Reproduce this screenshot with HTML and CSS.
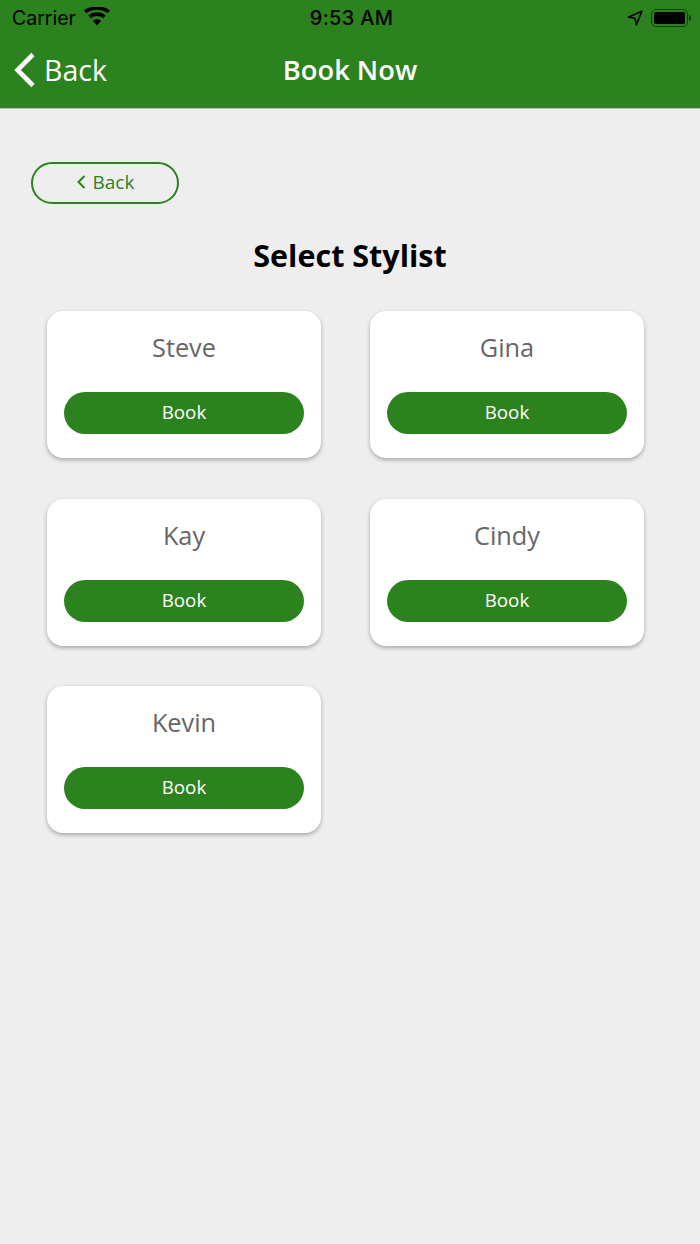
FILE: index.html
```html
<!DOCTYPE html>
<html lang="en">
<head>
    <meta charset="UTF-8">
    <meta name="viewport" content="width=device-width, initial-scale=1.0">
    <title>Book Now</title>
    <link rel="stylesheet" href="styles.css">
</head>
<body>
    <header class="header">
        <div class="status-bar">
            <div class="status-left">
                <span class="carrier">Carrier</span>
                <svg class="wifi" width="26" height="19" viewBox="0 0 26 19">
                    <path d="M13 18.5 L8.9 13.7 C11.2 11.7 14.8 11.7 17.1 13.7 Z" fill="#000"/>
                    <path d="M6.8 11.3 L4.3 8.4 C9.3 4.2 16.7 4.2 21.7 8.4 L19.2 11.3 C15.6 8.2 10.4 8.2 6.8 11.3 Z" fill="#000"/>
                    <path d="M2.3 6.1 L0 3.4 C7.5 -1.9 18.5 -1.9 26 3.4 L23.7 6.1 C17.4 1.6 8.6 1.6 2.3 6.1 Z" fill="#000"/>
                </svg>
            </div>
            <span class="time">9:53 AM</span>
            <div class="status-right">
                <svg class="arrow" width="16" height="16" viewBox="0 0 16 16">
                    <path d="M14.8 1.2 L1.4 7.2 L7.9 8.3 L9.4 14.8 Z" fill="none" stroke="#000" stroke-width="1.6" stroke-linejoin="round"/>
                </svg>
                <div class="battery"><div class="battery-fill"></div></div>
                <div class="battery-cap"></div>
            </div>
        </div>
        <nav class="nav">
            <a class="nav-back">
                <svg width="22" height="36" viewBox="0 0 22 36">
                    <path d="M20 2.5 L4.5 18 L20 33.5" fill="none" stroke="#fff" stroke-width="4.6"/>
                </svg>
                <span>Back</span>
            </a>
            <h2 class="nav-title">Book Now</h2>
        </nav>
    </header>

    <main class="content">
        <button class="back-btn">
            <svg width="10" height="14" viewBox="0 0 10 14">
                <path d="M8.5 1 L2.5 7 L8.5 13" fill="none" stroke="#2c821e" stroke-width="2"/>
            </svg>
            Back
        </button>
        <h1 class="page-title">Select Stylist</h1>
        <div class="stylists">
            <div class="card">
                <p class="card-name">Steve</p>
                <button class="book-btn">Book</button>
            </div>
            <div class="card">
                <p class="card-name">Gina</p>
                <button class="book-btn">Book</button>
            </div>
            <div class="card">
                <p class="card-name">Kay</p>
                <button class="book-btn">Book</button>
            </div>
            <div class="card">
                <p class="card-name">Cindy</p>
                <button class="book-btn">Book</button>
            </div>
            <div class="card">
                <p class="card-name">Kevin</p>
                <button class="book-btn">Book</button>
            </div>
        </div>
    </main>
</body>
</html>
```

FILE: styles.css
```css
*,
*:before,
*:after {
    padding: 0;
    margin: 0;
    box-sizing: border-box;
}

body {
    font-family: "Open Sans", sans-serif;
    background-color: #eeeeee;
    width: 700px;
    height: 1244px;
    overflow: hidden;
}

.header {
    height: 109px;
    background-color: #2c821e;
    border-bottom: 1px solid #b5b9b3;
}

.status-bar {
    height: 36px;
    padding: 0 9px 0 12px;
    display: grid;
    grid-template-columns: 1fr auto 1fr;
    align-items: center;
    color: #000;
    font-family: Inter, "Liberation Sans", sans-serif;
}

.status-left {
    display: flex;
    align-items: center;
    gap: 8px;
}

.carrier {
    font-size: 19.5px;
}

.wifi {
    margin-top: -3px;
}

.time {
    font-size: 20px;
    font-weight: 500;
    letter-spacing: 0.3px;
}

.status-right {
    display: flex;
    align-items: center;
    justify-content: flex-end;
}

.arrow {
    margin-right: 8px;
}

.battery {
    width: 37px;
    height: 18px;
    border: 1px solid #14400e;
    border-radius: 5px;
    padding: 2px;
}

.battery-fill {
    height: 100%;
    background-color: #000;
    border-radius: 2px;
}

.battery-cap {
    width: 2px;
    height: 6px;
    margin-left: 1px;
    background-color: #14400e;
    border-radius: 0 2px 2px 0;
}

.nav {
    height: 72px;
    padding-bottom: 5px;
    display: grid;
    grid-template-columns: 1fr auto 1fr;
    align-items: center;
    color: #fff;
}

.nav-back {
    display: flex;
    align-items: center;
    gap: 9px;
    padding-left: 13px;
    font-size: 28.5px;
}

.nav-title {
    font-size: 27.3px;
    font-weight: 600;
}

.content {
    padding: 53px 56px 0 31px;
}

.back-btn {
    display: flex;
    align-items: center;
    justify-content: center;
    gap: 7px;
    width: 148px;
    height: 42px;
    padding-bottom: 3px;
    color: #2c821e;
    background: none;
    border: 2px solid #2c821e;
    border-radius: 21px;
    font-family: inherit;
    font-size: 19px;
}

.page-title {
    margin: 31px -25px 0 0;
    text-align: center;
    color: #000;
    font-size: 30.5px;
    font-weight: 700;
    line-height: 41px;
}

.stylists {
    margin: 35px 0 0 16px;
    display: grid;
    grid-template-columns: 274px 274px;
    column-gap: 49px;
    row-gap: 40.5px;
}

.card {
    height: 147px;
    padding: 18px 17px 0;
    background-color: white;
    border-radius: 16px;
    box-shadow: 0 2px 4px rgba(0, 0, 0, 0.3);
    text-align: center;
}

.card-name {
    color: #666;
    font-size: 25.3px;
    line-height: 36px;
}

.book-btn {
    display: block;
    width: 240px;
    height: 42px;
    margin-top: 27px;
    padding-bottom: 2px;
    color: white;
    background-color: #2c821e;
    border: none;
    border-radius: 21px;
    font-family: inherit;
    font-size: 18.8px;
}
```
